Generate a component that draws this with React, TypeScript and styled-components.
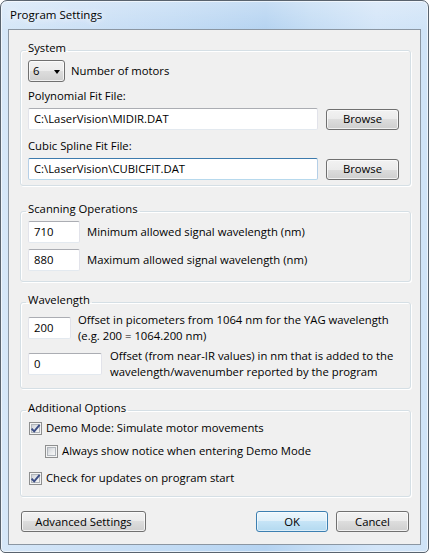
import React from 'react';
import styled, { createGlobalStyle } from 'styled-components';

const GlobalStyle = createGlobalStyle`
  html, body {
    margin: 0;
    padding: 0;
    background: #ffffff;
  }
  body {
    font-family: 'Segoe UI', 'Open Sans', 'Noto Sans', sans-serif;
    font-size: 11.3px;
    line-height: 16px;
    color: #000000;
  }
  * {
    box-sizing: border-box;
  }
`;

const Window = styled.div`
  width: 429px;
  height: 553px;
  display: flex;
  flex-direction: column;
  padding: 0 7px 7px;
  border: 1px solid #59636e;
  border-radius: 7px 7px 5px 5px;
  background:
    linear-gradient(180deg, rgba(255, 255, 255, 0.25) 0%, rgba(255, 255, 255, 0) 30px),
    linear-gradient(
      90deg,
      #d6e7f8 0%,
      #cde1f6 18%,
      #c2dbf4 40%,
      #b5d3f1 62%,
      #c3dcf4 72%,
      #d3e5f8 88%,
      #cfe3f7 100%
    );
  box-shadow: inset 0 0 0 1px rgba(255, 255, 255, 0.6);
`;

const TitleBar = styled.div`
  height: 28px;
  flex: none;
  padding: 6px 0 0 2px;
  font-size: 11.5px;
  text-shadow: 0 0 6px rgba(255, 255, 255, 0.95), 0 0 10px rgba(255, 255, 255, 0.8);
`;

const Client = styled.div`
  flex: 1;
  display: flex;
  flex-direction: column;
  padding: 10px 9px 0 11px;
  border: 1px solid #8b96a2;
  background: #f0f0f0;
`;

const Group = styled.fieldset<{ $gap: number; $bottom: number }>`
  margin: ${(p) => p.$gap}px 0 0;
  min-width: 0;
  padding: 0 11px ${(p) => p.$bottom}px 7px;
  border: 1px solid #d5dfe5;
  border-radius: 3px;
  box-shadow: inset 1px 1px 0 #ffffff, 1px 1px 0 #ffffff;
`;

const Legend = styled.legend`
  margin-left: -2px;
  padding: 0 2px 4px;
  line-height: 16px;
`;

const Row = styled.div<{ $gap?: number; $space?: number }>`
  display: flex;
  align-items: center;
  gap: ${(p) => p.$space ?? 6}px;
  margin-top: ${(p) => p.$gap ?? 0}px;
`;

const FieldLabel = styled.div<{ $gap: number }>`
  margin: ${(p) => p.$gap}px 0 4px;
`;

const Combo = styled.div`
  width: 37px;
  height: 22px;
  flex: none;
  display: flex;
  align-items: center;
  justify-content: space-between;
  padding: 0 4px;
  border: 1px solid #707070;
  border-radius: 3px;
  background: linear-gradient(180deg, #f2f2f2 0%, #ebebeb 50%, #dddddd 50%, #cfcfcf 100%);
  box-shadow: inset 0 0 0 1px rgba(255, 255, 255, 0.7);
`;

const ComboArrow = styled.span`
  width: 0;
  height: 0;
  margin-top: 1px;
  border-left: 3.5px solid transparent;
  border-right: 3.5px solid transparent;
  border-top: 4px solid #000000;
`;

const TextBox = styled.div<{ $width?: number; $focused?: boolean }>`
  width: ${(p) => (p.$width ? `${p.$width}px` : 'auto')};
  flex: ${(p) => (p.$width ? 'none' : '1')};
  height: 22px;
  display: flex;
  align-items: center;
  padding: 0 4px 0 5px;
  background: #ffffff;
  border: 1px solid ${(p) => (p.$focused ? '#b5cfe7' : '#e2e3ea')};
  border-top-color: ${(p) => (p.$focused ? '#3d7bad' : '#abadb3')};
  border-bottom-color: ${(p) => (p.$focused ? '#b7d9ed' : '#e3e9ef')};
  border-radius: 2px;
  white-space: nowrap;
`;

const Button = styled.div<{ $width: number; $default?: boolean; $left?: number }>`
  width: ${(p) => p.$width}px;
  height: 21px;
  flex: none;
  margin-left: ${(p) => p.$left ?? 0}px;
  display: flex;
  align-items: center;
  justify-content: center;
  border: 1px solid ${(p) => (p.$default ? '#3c7fb1' : '#707070')};
  border-radius: 3px;
  background: ${(p) =>
    p.$default
      ? 'linear-gradient(180deg, #edf7fd 0%, #deeff9 50%, #c6e4f6 50%, #b3d9f0 100%)'
      : 'linear-gradient(180deg, #f2f2f2 0%, #ebebeb 50%, #dddddd 50%, #cfcfcf 100%)'};
  box-shadow: inset 0 0 0 1px
    ${(p) => (p.$default ? 'rgba(255, 255, 255, 0.55)' : 'rgba(252, 252, 252, 0.75)')};
`;

const Note = styled.div`
  white-space: nowrap;
`;

const CheckRow = styled.div<{ $gap: number; $indent?: number }>`
  display: flex;
  align-items: center;
  gap: 4px;
  margin-top: ${(p) => p.$gap}px;
  padding-left: ${(p) => p.$indent ?? 0}px;
`;

const CheckBox = styled.div`
  width: 13px;
  height: 13px;
  flex: none;
  margin-left: 1px;
  display: flex;
  align-items: center;
  justify-content: center;
  border: 1px solid #8e8f8f;
  background: #f4f4f4;
  padding: 1px;
`;

const CheckInner = styled.div`
  width: 9px;
  height: 9px;
  border: 1px solid #b0b5bb;
  background: linear-gradient(135deg, #cdd1d6 0%, #e6e8ea 50%, #f7f7f7 100%);
  position: relative;
`;

const CheckMark = styled.svg`
  position: absolute;
  left: -2px;
  top: -2px;
  width: 11px;
  height: 11px;
`;

const ButtonRow = styled.div`
  display: flex;
  align-items: center;
  margin-top: 14px;
  padding: 0 2px 0 1px;
`;

const Spacer = styled.div`
  flex: 1;
`;

const Check = ({ checked }: { checked?: boolean }) => (
  <CheckBox>
    <CheckInner>
      {checked && (
        <CheckMark viewBox="0 0 11 11">
          <path d="M1.6 5.6 L4.2 8.4 L9.6 1.8" fill="none" stroke="#3b4d85" strokeWidth="1.9" />
        </CheckMark>
      )}
    </CheckInner>
  </CheckBox>
);

export default function App() {
  return (
    <>
      <GlobalStyle />
      <Window>
        <TitleBar>Program Settings</TitleBar>
        <Client>
          <Group $gap={0} $bottom={5}>
            <Legend>System</Legend>
            <Row>
              <Combo>
                <span>6</span>
                <ComboArrow />
              </Combo>
              <span>Number of motors</span>
            </Row>
            <FieldLabel $gap={6}>Polynomial Fit File:</FieldLabel>
            <Row $space={8}>
              <TextBox>C:\LaserVision\MIDIR.DAT</TextBox>
              <Button $width={73}>Browse</Button>
            </Row>
            <FieldLabel $gap={8}>Cubic Spline Fit File:</FieldLabel>
            <Row $space={8}>
              <TextBox $focused>C:\LaserVision\CUBICFIT.DAT</TextBox>
              <Button $width={73}>Browse</Button>
            </Row>
          </Group>

          <Group $gap={15} $bottom={10}>
            <Legend>Scanning Operations</Legend>
            <Row $space={7}>
              <TextBox $width={52}>710</TextBox>
              <span>Minimum allowed signal wavelength (nm)</span>
            </Row>
            <Row $gap={6} $space={7}>
              <TextBox $width={52}>880</TextBox>
              <span>Maximum allowed signal wavelength (nm)</span>
            </Row>
          </Group>

          <Group $gap={10} $bottom={8}>
            <Legend>Wavelength</Legend>
            <Row $space={7}>
              <TextBox $width={43}>200</TextBox>
              <Note>
                Offset in picometers from 1064 nm for the YAG wavelength
                <br />
                (e.g. 200 = 1064.200 nm)
              </Note>
            </Row>
            <Row $gap={4} $space={8}>
              <TextBox $width={74}>0</TextBox>
              <Note>
                Offset (from near-IR values) in nm that is added to the
                <br />
                wavelength/wavenumber reported by the program
              </Note>
            </Row>
          </Group>

          <Group $gap={11} $bottom={10}>
            <Legend>Additional Options</Legend>
            <CheckRow $gap={0}>
              <Check checked />
              <span>Demo Mode: Simulate motor movements</span>
            </CheckRow>
            <CheckRow $gap={7} $indent={16}>
              <Check />
              <span>Always show notice when entering Demo Mode</span>
            </CheckRow>
            <CheckRow $gap={11}>
              <Check checked />
              <span>Check for updates on program start</span>
            </CheckRow>
          </Group>

          <ButtonRow>
            <Button $width={125}>Advanced Settings</Button>
            <Spacer />
            <Button $width={72} $default>
              OK
            </Button>
            <Button $width={73} $left={8}>
              Cancel
            </Button>
          </ButtonRow>
        </Client>
      </Window>
    </>
  );
}
